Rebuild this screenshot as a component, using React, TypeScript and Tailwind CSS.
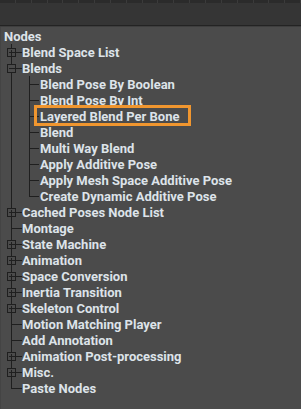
type Row = {
  label: string
  depth: 0 | 1
  box?: "plus" | "minus"
  last?: boolean
  highlight?: boolean
}

const rows: Row[] = [
  { label: "Blend Space List", depth: 0, box: "plus" },
  { label: "Blends", depth: 0, box: "minus" },
  { label: "Blend Pose By Boolean", depth: 1 },
  { label: "Blend Pose By Int", depth: 1 },
  { label: "Layered Blend Per Bone", depth: 1, highlight: true },
  { label: "Blend", depth: 1 },
  { label: "Multi Way Blend", depth: 1 },
  { label: "Apply Additive Pose", depth: 1 },
  { label: "Apply Mesh Space Additive Pose", depth: 1 },
  { label: "Create Dynamic Additive Pose", depth: 1, last: true },
  { label: "Cached Poses Node List", depth: 0, box: "plus" },
  { label: "Montage", depth: 0 },
  { label: "State Machine", depth: 0, box: "plus" },
  { label: "Animation", depth: 0, box: "plus" },
  { label: "Space Conversion", depth: 0, box: "plus" },
  { label: "Inertia Transition", depth: 0, box: "plus" },
  { label: "Skeleton Control", depth: 0, box: "plus" },
  { label: "Motion Matching Player", depth: 0 },
  { label: "Add Annotation", depth: 0 },
  { label: "Animation Post-processing", depth: 0, box: "plus" },
  { label: "Misc.", depth: 0, box: "plus" },
  { label: "Paste Nodes", depth: 0, last: true },
]

const LINE = "#1f1f1f"

function Connector({ row }: { row: Row }) {
  if (row.depth === 0) {
    return (
      <svg width="18" height="16" className="shrink-0" shapeRendering="crispEdges">
        <line x1="7.5" y1="0" x2="7.5" y2={row.last ? 8.5 : 16} stroke={LINE} />
        <line x1="7.5" y1="8.5" x2="18" y2="8.5" stroke={LINE} />
        {row.box && (
          <>
            <rect x="3.5" y="4.5" width="8" height="8" fill="#4b4b4b" stroke={LINE} />
            <line x1="5" y1="8.5" x2="11" y2="8.5" stroke={LINE} />
            {row.box === "plus" && <line x1="7.5" y1="6" x2="7.5" y2="12" stroke={LINE} />}
          </>
        )}
      </svg>
    )
  }
  return (
    <svg width="36" height="16" className="shrink-0" shapeRendering="crispEdges">
      <line x1="7.5" y1="0" x2="7.5" y2="16" stroke={LINE} />
      <line x1="25.5" y1="0" x2="25.5" y2={row.last ? 8.5 : 16} stroke={LINE} />
      <line x1="25.5" y1="8.5" x2="35" y2="8.5" stroke={LINE} />
    </svg>
  )
}

export default function App() {
  return (
    <div
      className="w-[301px] h-[409px] overflow-hidden bg-[#4b4b4b] flex flex-col"
      style={{ fontFamily: "Roboto, 'DejaVu Sans', sans-serif" }}
    >
      <div className="h-[3px] bg-[#2b2b2b] flex">
        {Array.from({ length: 19 }).map((_, i) => (
          <div key={i} className="w-[16px] h-full border-r border-[#3b3b3b]" />
        ))}
      </div>
      <div className="h-[22px] bg-[#353535]" />
      <div className="h-[1px] bg-[#232323]" />
      <div className="h-[1px] bg-[#3e3e3e]" />
      <div className="flex-1 pt-[1px] border-l border-[#444444]">
        <div className="h-[16px] pl-[3px] flex items-center text-[13px] font-bold text-[#dde3e9] leading-none">
          Nodes
        </div>
        {rows.map((row) => (
          <div key={row.label} className="h-[16px] pl-[3px] flex items-center">
            <Connector row={row} />
            <span className="relative text-[13px] font-bold text-[#dde3e9] leading-none whitespace-nowrap">
              {row.label}
              {row.highlight && (
                <span className="absolute -left-[6px] -right-[12px] -top-[5px] -bottom-[3px] border-[3px] border-[#f0962f]" />
              )}
            </span>
          </div>
        ))}
      </div>
    </div>
  )
}
